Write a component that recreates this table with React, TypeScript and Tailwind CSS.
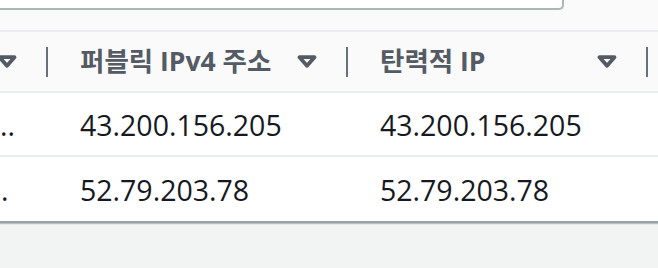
const Caret = () => (
  <svg width="20" height="13" viewBox="0 0 20 13" className="shrink-0">
    <path d="M2.5 2.2 H17.5 L10 10.8 Z" fill="none" stroke="#545b64" strokeWidth="3.8" strokeLinejoin="round" />
  </svg>
);

const Sep = () => <div className="w-[2px] h-[30px] bg-[#687078] shrink-0" />;

const rows = [
  { cut: "..", pad: "pl-0", pub: "43.200.156.205", eip: "43.200.156.205", h: "h-[64px]" },
  { cut: ".", pad: "pl-[1px]", pub: "52.79.203.78", eip: "52.79.203.78", h: "h-[66px]" },
];

export default function App() {
  return (
    <div
      className="w-[658px] h-[268px] overflow-hidden bg-[#f2f3f3]"
      style={{ fontFamily: '"Open Sans", "Noto Sans CJK KR", sans-serif' }}
    >
      {/* filter input edge */}
      <div className="h-[30px] bg-[#fafafa]">
        <div className="w-[564px] h-[10px] bg-white border-b-2 border-r-2 border-[#aab7b8] rounded-br-[5px]" />
      </div>

      <div className="bg-white border-t-2 border-[#eaeded]">
        {/* header */}
        <div className="flex items-center h-[61px] bg-[#fafafa] border-b-2 border-[#eaeded] text-[#545b64] font-bold text-[26.5px] leading-none">
          <div className="w-[46px] shrink-0 flex justify-end pr-[29px]">
            <Caret />
          </div>
          <Sep />
          <div className="w-[298px] shrink-0 flex items-center pl-[32px] pr-[29px]">
            <span className="flex-1 whitespace-nowrap">퍼블릭 IPv4 주소</span>
            <Caret />
          </div>
          <Sep />
          <div className="w-[298px] shrink-0 flex items-center pl-[32px] pr-[29px]">
            <span className="flex-1 whitespace-nowrap">탄력적 IP</span>
            <Caret />
          </div>
          <Sep />
          <div className="flex-1" />
        </div>

        {/* rows */}
        {rows.map((r, i) => (
          <div
            key={i}
            className={`flex items-center pt-[3px] ${r.h} text-[28.5px] leading-none text-[#16191f] ${
              i === rows.length - 1
                ? "border-b-2 border-[#97a3a4] shadow-[0_1px_1px_rgba(0,28,36,0.25)]"
                : "border-b-2 border-[#eaeded]"
            }`}
          >
            <div className={`w-[48px] shrink-0 ${r.pad}`}>{r.cut}</div>
            <div className="w-[300px] shrink-0 pl-[32px] whitespace-nowrap">{r.pub}</div>
            <div className="w-[300px] shrink-0 pl-[32px] whitespace-nowrap">{r.eip}</div>
          </div>
        ))}
      </div>
    </div>
  );
}
